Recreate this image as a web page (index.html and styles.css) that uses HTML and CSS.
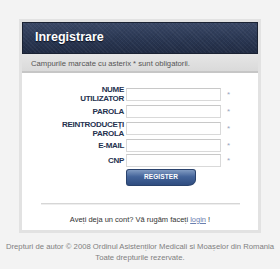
FILE: index.html
```html
<!DOCTYPE html>
<html>
<head>
<meta charset="utf-8">
<link rel="stylesheet" href="styles.css">
</head>
<body>
<div class="page">
  <div class="box">
    <div class="header">Inregistrare</div>
    <div class="notice">Campurile marcate cu asterix * sunt obligatorii.</div>
    <div class="content">
      <div class="form">
        <div class="label two">NUME<br>UTILIZATOR</div><div class="field"><span class="input"></span></div><div class="req">*</div>
        <div class="label">PAROLA</div><div class="field"><span class="input"></span></div><div class="req">*</div>
        <div class="label two">REINTRODUCEȚI<br>PAROLA</div><div class="field"><span class="input"></span></div><div class="req">*</div>
        <div class="label">E-MAIL</div><div class="field"><span class="input"></span></div><div class="req">*</div>
        <div class="label">CNP</div><div class="field"><span class="input"></span></div><div class="req">*</div>
        <div class="label"></div><div class="field"><span class="button">REGISTER</span></div><div class="req"></div>
      </div>
      <div class="rule"></div>
      <div class="login">Aveți deja un cont? Vă rugăm faceți <a href="#">login</a> !</div>
    </div>
  </div>
  <div class="footer">Drepturi de autor © 2008 Ordinul Asistenților Medicali si Moașelor din Romania<br>Toate drepturile rezervate.</div>
</div>
</body>
</html>
```
FILE: styles.css
```css
html, body {
  margin: 0;
  padding: 0;
}
body {
  background: #f3f3f3;
  font-family: "Liberation Sans", Arial, sans-serif;
}
.page {
  padding-top: 19px;
}
.box {
  margin-left: 19px;
  width: 236px;
  border: 3px solid #e2e2e2;
  background: #ffffff;
}
.header {
  height: 32px;
  box-sizing: border-box;
  border: 1px solid #1a2233;
  background:
    repeating-linear-gradient(45deg, rgba(255,255,255,0.04) 0 1px, transparent 1px 3px),
    repeating-linear-gradient(-45deg, rgba(0,0,0,0.06) 0 1px, transparent 1px 3px),
    linear-gradient(#3a4866, #2a3753 55%, #212c44);
  color: #ffffff;
  font-weight: bold;
  font-size: 12.5px;
  line-height: 28px;
  padding-left: 12px;
  text-shadow: 0 1px 1px #0b1020;
}
.notice {
  height: 19px;
  box-sizing: border-box;
  background: linear-gradient(#e6e6e6, #dadada);
  border-bottom: 2px solid #c6c6c6;
  margin-bottom: 2px;
  color: #555555;
  font-size: 7.7px;
  line-height: 18px;
  padding-left: 9px;
  padding-top: 1px;
}
.content {
  background: #ffffff;
  padding-top: 10px;
  padding-bottom: 1px;
}
.form {
  display: grid;
  grid-template-columns: 104px 97px 12px;
  grid-template-rows: 18px 17px 17px 16px 14px 19px;
  align-items: center;
}
.label {
  text-align: right;
  padding-right: 2px;
  font-size: 8px;
  font-weight: bold;
  color: #25324f;
  line-height: 9px;
  letter-spacing: -0.3px;
}
.field {
  display: flex;
  align-items: center;
}
.input {
  display: block;
  width: 95px;
  height: 13px;
  box-sizing: border-box;
  border: 1px solid #d9d9d9;
  border-top-color: #c8c8c8;
  background: #ffffff;
}
.req {
  color: #9aa6bd;
  font-size: 8px;
  padding-left: 4px;
  line-height: 9px;
}
.button {
  display: block;
  width: 70px;
  height: 17px;
  box-sizing: border-box;
  margin-top: 2px;
  border-radius: 3px 3px 3px 3px;
  border-bottom-right-radius: 8px 6px;
  background: linear-gradient(#819bc2, #44649a 45%, #2f4d80);
  border: 1px solid #2a436d;
  color: #ffffff;
  font-size: 6.5px;
  font-weight: bold;
  text-align: center;
  line-height: 14px;
  letter-spacing: 0.1px;
}
.rule {
  margin: 17px 18px 0 19px;
  height: 1px;
  background: #d6d6d6;
  border-bottom: 1px solid #eeeeee;
}
.login {
  text-align: center;
  font-size: 7.5px;
  color: #333333;
  margin-top: 10px;
  height: 14px;
}
.login a {
  color: #6a80b0;
}
.footer {
  text-align: center;
  font-size: 7.7px;
  color: #808080;
  line-height: 11px;
  margin-top: 8px;
}
```
